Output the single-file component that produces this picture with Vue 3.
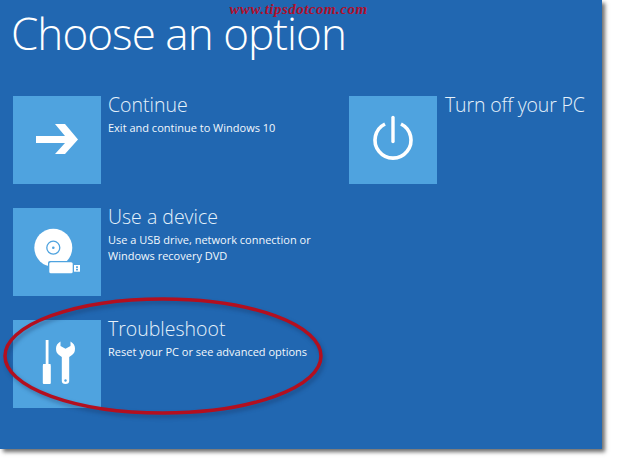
<template>
  <div class="page">
    <main class="panel">
      <span class="watermark">www.tipsdotcom.com</span>
      <h1 class="title">Choose an option</h1>

      <div class="options">
        <div class="column">
          <div v-for="item in leftOptions" :key="item.name" class="option">
            <div class="tile">
              <svg v-if="item.icon === 'arrow'" width="88" height="88" viewBox="0 0 88 88">
                <path d="M23 40h29L42 28h10l13 15.500L52 58H42l10-11H23z" fill="#fff" />
              </svg>
              <svg v-else-if="item.icon === 'disc'" width="88" height="88" viewBox="0 0 88 88">
                <circle cx="40.300" cy="39.700" r="19" fill="#fff" />
                <circle cx="40.300" cy="39.700" r="6.500" fill="none" stroke="#4fa3df" stroke-width="1.300" />
                <circle cx="40.300" cy="39.700" r="1.300" fill="#4fa3df" />
                <rect x="35" y="53" width="26" height="13.500" rx="2" fill="#4fa3df" />
                <rect x="36.300" y="54.300" width="23.400" height="11" rx="1.500" fill="#fff" />
                <rect x="61" y="57" width="6" height="6.700" fill="#fff" />
                <rect x="63" y="58.300" width="2" height="1.600" fill="#4fa3df" />
                <rect x="63" y="60.800" width="2" height="1.600" fill="#4fa3df" />
              </svg>
              <svg v-else viewBox="0 0 88 88" width="88" height="88">
                <path d="M32.700 20h2.800v24h2l.3 2v17q0 1-1 1h-6q-1 0-1-1V46l.3-2h2.600z" fill="#fff" />
                <path d="M47.500 21.500Q43 24 43 28.500q0 4.500 3 6.500l2.800 2v24q0 3 3.700 3t3.700-3V37l2.800-2q3-2 3-6.500T57.500 21.500V26l-5 2.800-5-2.800z" fill="#fff" />
                <circle cx="52.500" cy="60.500" r="1.200" fill="#4fa3df" />
              </svg>
            </div>
            <div class="info">
              <h2 class="name">{{ item.name }}</h2>
              <p class="desc">{{ item.desc }}</p>
            </div>
          </div>
        </div>

        <div class="column">
          <div class="option">
            <div class="tile">
              <svg width="88" height="88" viewBox="0 0 88 88">
                <path d="M36 28A18 18 0 1 0 52 28" fill="none" stroke="#fff" stroke-width="3.600" />
                <path d="M44 21.500v24" fill="none" stroke="#fff" stroke-width="3.400" stroke-linecap="round" />
              </svg>
            </div>
            <div class="info">
              <h2 class="name name-wide">Turn off your PC</h2>
            </div>
          </div>
        </div>
      </div>

      <!-- red hand drawn ring -->
      <svg class="ring" width="602" height="449" viewBox="0 0 602 449">
        <ellipse class="ring-shadow" cx="163" cy="356" rx="158" ry="57" />
        <ellipse class="ring-line" cx="163" cy="356" rx="158" ry="57" />
      </svg>
    </main>
  </div>
</template>

<script setup>
const leftOptions = [
  { name: 'Continue', desc: 'Exit and continue to Windows 10', icon: 'arrow' },
  { name: 'Use a device', desc: 'Use a USB drive, network connection or Windows recovery DVD', icon: 'disc' },
  { name: 'Troubleshoot', desc: 'Reset your PC or see advanced options', icon: 'tools' }
]
</script>

<style>
html,
body {
  background: #fff;
}
</style>

<style scoped>
.page {
  width: 617px;
  height: 464px;
  overflow: hidden;
}

.panel {
  position: relative;
  box-sizing: border-box;
  width: 602px;
  height: 449px;
  padding: 0 13px;
  background: #2167b1;
  color: #fff;
  font-family: "Open Sans", "Liberation Sans", sans-serif;
  box-shadow: 3px 3px 4px rgba(60, 60, 60, 0.75);
}

.watermark {
  position: absolute;
  left: 229.500px;
  top: 2px;
  color: #b0102c;
  font-family: "Liberation Serif", serif;
  font-size: 15px;
  line-height: 14px;
  font-weight: bold;
  font-style: italic;
  letter-spacing: 0.480px;
}

.title {
  box-sizing: border-box;
  height: 96px;
  margin: 0 0 0 -2px;
  padding-top: 16px;
  font-size: 44px;
  font-weight: 300;
  line-height: 34px;
  letter-spacing: -0.950px;
  white-space: nowrap;
}

.options {
  display: grid;
  grid-template-columns: 336px 1fr;
}

.column {
  display: flex;
  flex-direction: column;
  gap: 24px;
}

.option {
  display: flex;
  gap: 7px;
  height: 88px;
}

.tile {
  flex: none;
  width: 88px;
  height: 88px;
  background: #4fa3df;
}

.tile svg {
  display: block;
}

.info {
  min-width: 0;
}

.name {
  margin: -4px 0 0;
  font-size: 19.500px;
  font-weight: 300;
  line-height: 26px;
  color: #e6f2fb;
  white-space: nowrap;
}

.name-wide {
  margin-left: 1px;
  letter-spacing: -0.150px;
}

.desc {
  margin: 2px 0 0;
  width: 222px;
  font-size: 11px;
  line-height: 16px;
  color: #f2f8fd;
}

.ring {
  position: absolute;
  left: 0;
  top: 0;
  pointer-events: none;
}

.ring-line {
  fill: none;
  stroke: #b30f1f;
  stroke-width: 3.500;
}

.ring-shadow {
  fill: none;
  stroke: rgba(20, 40, 80, 0.45);
  stroke-width: 3;
  transform: translate(2px, 3px);
  filter: blur(2px);
}
</style>
